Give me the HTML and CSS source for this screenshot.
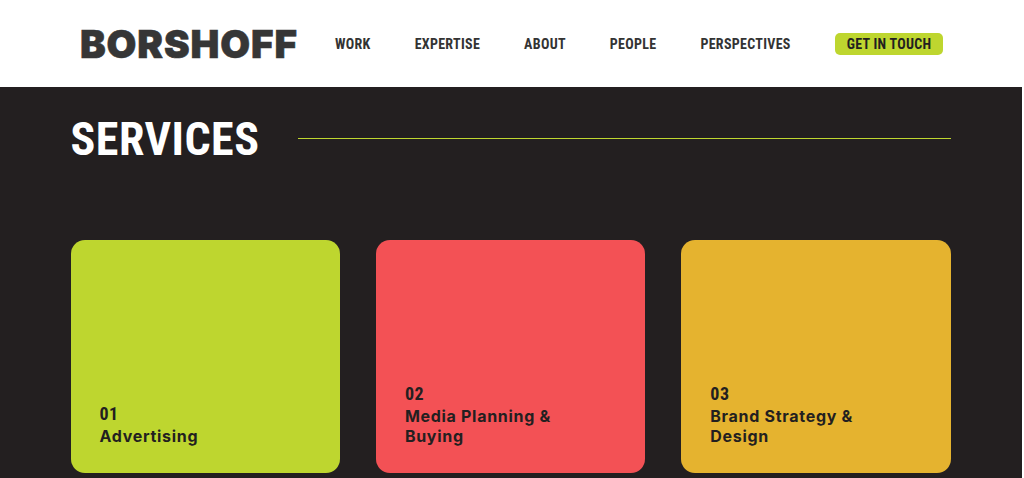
FILE: index.html
```html
<!DOCTYPE html>
<html lang="en">
<head>
<meta charset="UTF-8">
<meta name="viewport" content="width=device-width, initial-scale=1.0">
<title>Borshoff - Services</title>
<link rel="stylesheet" href="styles.css">
</head>
<body>
<div class="page">
  <header class="site-header">
    <a class="logo" href="#">BORSHOFF</a>
    <nav class="main-nav">
      <a href="#">WORK</a>
      <a href="#">EXPERTISE</a>
      <a href="#">ABOUT</a>
      <a href="#">PEOPLE</a>
      <a href="#">PERSPECTIVES</a>
      <a class="nav-btn" href="#">GET IN TOUCH</a>
    </nav>
  </header>
  <section class="services">
    <div class="services-title">
      <h1>SERVICES</h1>
      <div class="title-line"></div>
    </div>
    <div class="cards">
      <div class="card card-green">
        <span class="card-num">01</span>
        <h2>Advertising</h2>
      </div>
      <div class="card card-red">
        <span class="card-num">02</span>
        <h2>Media Planning &amp; Buying</h2>
      </div>
      <div class="card card-yellow">
        <span class="card-num">03</span>
        <h2>Brand Strategy &amp; Design</h2>
      </div>
    </div>
  </section>
</div>
</body>
</html>
```

FILE: styles.css
```css
body {
  margin: 0;
  background-color: #fff;
  font-family: "Roboto Condensed", "Liberation Sans Narrow", Roboto, sans-serif;
  overflow: hidden;
}

.page {
  width: 1022px;
  height: 478px;
  overflow: hidden;
}

.site-header {
  display: flex;
  align-items: center;
  height: 87px;
  padding-left: 80px;
  box-sizing: border-box;
}

.logo {
  width: 255px;
  font-family: Inter, sans-serif;
  font-size: 38.5px;
  font-weight: 900;
  letter-spacing: 0.9px;
  color: #363636;
  text-decoration: none;
  white-space: nowrap;
  -webkit-text-stroke: 0.6px #363636;
}

.main-nav {
  display: flex;
  align-items: center;
  gap: 44px;
}

.main-nav a {
  font-size: 14px;
  font-weight: 700;
  letter-spacing: 0.3px;
  color: #333;
  text-decoration: none;
}

.main-nav .nav-btn {
  padding: 3px 12px;
  background-color: #bed62f;
  border-radius: 5px;
  color: #231f20;
}

.services {
  height: 391px;
  padding: 0 71.3px 0 70.5px;
  box-sizing: border-box;
  background-color: #231f20;
}

.services-title {
  display: flex;
  align-items: center;
  gap: 38px;
  height: 103px;
}

.services-title h1 {
  margin: 0;
  font-size: 46px;
  font-weight: 700;
  letter-spacing: 0.5px;
  color: #fff;
}

.title-line {
  flex: 1;
  height: 1px;
  background-color: #bed62f;
}

.cards {
  display: flex;
  gap: 36px;
  margin-top: 50px;
}

.card {
  display: flex;
  flex-direction: column;
  justify-content: flex-end;
  flex: 1;
  height: 233px;
  padding: 0 29px 27px;
  box-sizing: border-box;
  border-radius: 14px;
  color: #231f20;
}

.card-green {
  background-color: #bed62f;
}

.card-red {
  background-color: #f35155;
}

.card-yellow {
  background-color: #e5b32f;
}

.card-num {
  margin-bottom: 2px;
  font-size: 18px;
  font-weight: 700;
  letter-spacing: 0.5px;
  line-height: 20px;
}

.card h2 {
  margin: 0;
  max-width: 170px;
  font-family: Inter, sans-serif;
  font-size: 16px;
  font-weight: 700;
  letter-spacing: 0.7px;
  line-height: 20px;
}
```
